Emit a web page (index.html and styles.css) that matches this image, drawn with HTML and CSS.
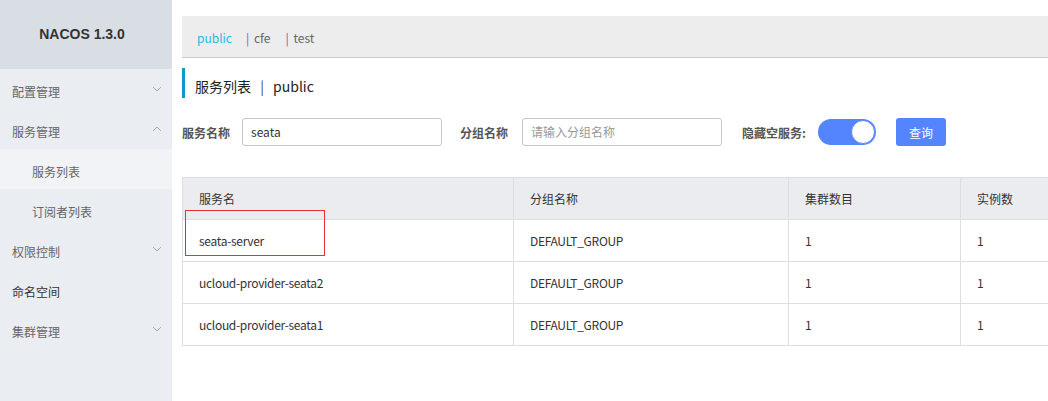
FILE: index.html
```html
<!DOCTYPE html>
<html lang="zh-CN">
<head>
<meta charset="utf-8">
<title>NACOS 1.3.0</title>
<link rel="stylesheet" href="styles.css">
</head>
<body>
<aside class="sidebar">
  <div class="logo">NACOS 1.3.0</div>
  <ul class="menu">
    <li class="menu-item muted">配置管理<svg class="chev" viewBox="0 0 10 6" width="10" height="6"><path d="M1 1 L5 5 L9 1" fill="none" stroke="#a3a6ad" stroke-width="1"/></svg></li>
    <li class="menu-item muted">服务管理<svg class="chev" viewBox="0 0 10 6" width="10" height="6"><path d="M1 5 L5 1 L9 5" fill="none" stroke="#a3a6ad" stroke-width="1"/></svg></li>
    <li class="menu-item sub active">服务列表</li>
    <li class="menu-item sub">订阅者列表</li>
    <li class="menu-item muted">权限控制<svg class="chev" viewBox="0 0 10 6" width="10" height="6"><path d="M1 1 L5 5 L9 1" fill="none" stroke="#a3a6ad" stroke-width="1"/></svg></li>
    <li class="menu-item dark">命名空间</li>
    <li class="menu-item muted">集群管理<svg class="chev" viewBox="0 0 10 6" width="10" height="6"><path d="M1 1 L5 5 L9 1" fill="none" stroke="#a3a6ad" stroke-width="1"/></svg></li>
  </ul>
</aside>
<main class="main">
  <div class="ns-bar">
    <span class="ns current">public</span>
    <span class="ns"><span class="sep">|</span> cfe</span>
    <span class="ns"><span class="sep">|</span> test</span>
  </div>
  <div class="page-title">服务列表 <span class="title-sep">|</span> public</div>
  <form class="filters">
    <label class="flabel">服务名称</label>
    <div class="input first">seata</div>
    <label class="flabel second">分组名称</label>
    <div class="input placeholder">请输入分组名称</div>
    <label class="flabel third">隐藏空服务:</label>
    <span class="switch"><span class="knob"></span></span>
    <button type="button" class="btn">查询</button>
  </form>
  <table class="grid">
    <colgroup>
      <col class="c1"><col class="c2"><col class="c3"><col class="c4">
    </colgroup>
    <thead>
      <tr><th>服务名</th><th>分组名称</th><th>集群数目</th><th>实例数</th></tr>
    </thead>
    <tbody>
      <tr><td>seata-server</td><td>DEFAULT_GROUP</td><td>1</td><td>1</td></tr>
      <tr><td>ucloud-provider-seata2</td><td>DEFAULT_GROUP</td><td>1</td><td>1</td></tr>
      <tr><td>ucloud-provider-seata1</td><td>DEFAULT_GROUP</td><td>1</td><td>1</td></tr>
    </tbody>
  </table>
</main>
<div class="highlight-box"></div>
</body>
</html>
```
FILE: styles.css
```css
* { box-sizing: border-box; }
html, body { margin: 0; padding: 0; }
body {
  width: 1048px;
  height: 401px;
  overflow: hidden;
  display: flex;
  font-family: "Noto Sans CJK SC", "Noto Sans", sans-serif;
  font-size: 12px;
  color: #333;
  background: #fff;
  position: relative;
}
.sidebar {
  width: 172px;
  flex: 0 0 172px;
  background: #eaedf1;
  height: 100%;
}
.logo {
  height: 69px;
  line-height: 69px;
  background: #d9dde4;
  text-align: center;
  padding-right: 8px;
  font-family: "Liberation Sans", Arial, sans-serif;
  font-weight: bold;
  font-size: 14px;
  color: #333;
}
.menu { list-style: none; margin: 0; padding: 0; }
.menu-item {
  height: 40px;
  padding-top: 4px;
  padding-left: 12px;
  padding-right: 10px;
  display: flex;
  align-items: center;
  justify-content: space-between;
  color: #666;
}
.menu-item.dark { color: #333; }
.menu-item.muted { color: #666; }
.menu-item.sub { padding-left: 32px; color: #666; }
.menu-item.active { background: #f2f3f7; }
.chev { display: block; margin-top: -5px; }

.main {
  flex: 1;
  min-width: 0;
  overflow: hidden;
  padding: 16px 0 0 10px;
}
.ns-bar {
  height: 42px;
  background: #ededed;
  border-bottom: 1px solid #cccccc;
  display: flex;
  align-items: center;
  padding-left: 15px;
  padding-top: 2px;
  white-space: nowrap;
}
.ns { margin-right: 15px; color: #666; }
.ns.current { color: #2eb7dc; margin-right: 14px; }
.sep { color: #6b6593; margin-right: 2px; }

.page-title {
  margin-top: 10px;
  height: 30px;
  border-left: 3px solid #0a9bcb;
  padding-left: 10px;
  padding-top: 6px;
  line-height: 25px;
  font-size: 14px;
  color: #222;
}
.title-sep { margin: 0 6px; color: #444; }

.filters {
  margin: 20px 0 0 0;
  display: flex;
  align-items: center;
  height: 28px;
  white-space: nowrap;
}
.flabel { font-weight: bold; color: #555; margin-right: 12px; }
.flabel.second { margin-left: 18px; margin-right: 14px; }
.flabel.third { margin-left: 20px; margin-right: 12px; }
.input {
  width: 200px;
  height: 28px;
  border: 1px solid #c4c6cf;
  border-radius: 3px;
  padding-left: 8px;
  line-height: 26px;
  color: #333;
  background: #fff;
}
.input.placeholder { color: #999; }
.switch {
  width: 58px;
  height: 26px;
  border-radius: 13px;
  background: #5584ff;
  position: relative;
  display: inline-block;
  margin-right: 20px;
}
.knob {
  position: absolute;
  right: 1px;
  top: 1px;
  width: 24px;
  height: 24px;
  border-radius: 50%;
  background: #fff;
  border: 1px solid #5584ff;
}
.btn {
  width: 50px;
  height: 28px;
  border: 0;
  border-radius: 3px;
  background: #5584ff;
  color: #fff;
  font-family: inherit;
  font-size: 12px;
  padding: 0;
}

.grid {
  margin-top: 31px;
  border-collapse: collapse;
  table-layout: fixed;
  width: 1000px;
  border: 1px solid #dcdee3;
}
.grid col.c1 { width: 331px; }
.grid col.c2 { width: 275px; }
.grid col.c3 { width: 172px; }
.grid col.c4 { width: 222px; }
.grid th, .grid td {
  height: 42px;
  padding: 0 16px;
  text-align: left;
  border: 1px solid #dcdee3;
  font-weight: normal;
  color: #333;
  white-space: nowrap;
}
.grid th { background: #ebecf0; }
.grid td { background: #fff; letter-spacing: -0.3px; }

.highlight-box {
  position: absolute;
  left: 185px;
  top: 210px;
  width: 140px;
  height: 46px;
  border: 1px solid #e5323a;
  pointer-events: none;
}
```
